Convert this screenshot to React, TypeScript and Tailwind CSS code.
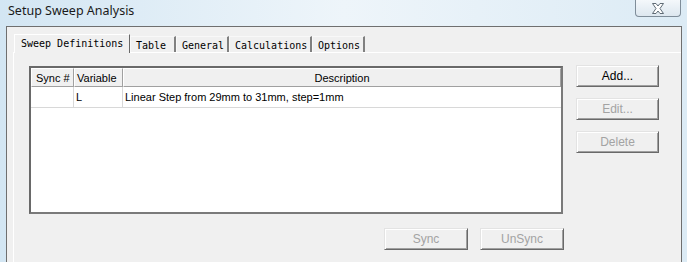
import React from "react";

const tabs = [
  { label: "Sweep Definitions", width: "w-[116px]", active: true },
  { label: "Table", width: "w-[46px]" },
  { label: "General", width: "w-[53px]" },
  { label: "Calculations", width: "w-[83px]" },
  { label: "Options", width: "w-[53px]" },
];

function Tab({ label, width, active }: { label: string; width: string; active?: boolean }) {
  if (active) {
    return (
      <div
        className={`${width} h-[19px] -mb-px relative z-10 bg-[#f0f0f0] border-t border-l border-white border-r border-r-[#696969] pl-[6px] pt-[3px] text-[10px] leading-[12px] whitespace-nowrap`}
      >
        {label}
      </div>
    );
  }
  return (
    <div className={`${width} h-[16px] mt-[2px] border-t border-l border-[#f8f8f8] border-r-2 border-r-[#808080] pl-[5px] pt-[3px] text-[10px] leading-[12px] whitespace-nowrap`}>
      {label}
    </div>
  );
}

function Btn({ children, disabled, w = "w-[83px]" }: { children: React.ReactNode; disabled?: boolean; w?: string }) {
  return (
    <div
      className={`${w} h-[22px] flex items-center justify-center bg-[#f0f0f0] border border-t-[#e3e3e3] border-l-[#e3e3e3] border-r-[#696969] border-b-[#696969] shadow-[inset_1px_1px_0_#ffffff,inset_-1px_-1px_0_#a0a0a0] text-[12px] ${
        disabled ? "text-[#a3a3a3]" : "text-black"
      }`}
    >
      {children}
    </div>
  );
}

export default function App() {
  return (
    <div className="relative w-[687px] h-[262px] overflow-hidden bg-gradient-to-r from-[#d3e6f3] via-[#eef5fa] to-[#dcebf5] font-['Liberation_Sans',Arial,sans-serif] text-black">
      {/* title bar */}
      <div className="h-[26px] pl-[8px] pt-[2px] font-['Noto_Sans',sans-serif] text-[12.5px] leading-[18px] text-[#1a1a1a]">
        Setup Sweep Analysis
      </div>
      <div className="absolute top-0 right-[6px] w-[46px] h-[17px] rounded-b-[4px] border border-t-0 border-[#7f8d99] bg-gradient-to-b from-[#f4f8fb] to-[#dde7ef] flex items-center justify-center">
        <svg width="14" height="11" viewBox="0 0 14 11">
          <path
            d="M1.5 0.5 H5 L7 3 L9 0.5 H12.5 L9 5.5 L12.5 10.5 H9 L7 8 L5 10.5 H1.5 L5 5.5 Z"
            fill="#ffffff"
            stroke="#5f6b75"
            strokeWidth="1"
          />
        </svg>
      </div>

      {/* dialog body */}
      <div className="ml-[6px] mr-[5px] h-[236px] border-t border-l border-r border-[#6f6f6f] bg-[#f0f0f0] pt-[7px]">
        {/* tab strip */}
        <div className="flex items-start ml-[7px] font-['DejaVu_Sans_Mono','Liberation_Mono',monospace]">
          {tabs.map((t) => (
            <Tab key={t.label} label={t.label} width={t.width} active={t.active} />
          ))}
        </div>

        {/* tab page */}
        <div className="ml-[6px] h-[220px] border-t border-l border-white pl-[15px] pt-[13px]">
          <div className="flex items-start gap-[13px]">
            <div className="flex flex-col">
              <div className="w-[534px] h-[148px] border-2 border-t-[#696969] border-l-[#696969] border-r-[#7a7a7a] border-b-[#7a7a7a] bg-white">
                <div className="flex h-[19px] text-[11px] leading-[18px]">
                  <div className="w-[43px] bg-[#f0f0f0] border-t border-l border-white border-r border-b border-r-[#a0a0a0] border-b-[#a0a0a0] pl-[4px]">
                    Sync #
                  </div>
                  <div className="w-[49px] bg-[#f0f0f0] border-t border-l border-white border-r border-b border-r-[#a0a0a0] border-b-[#a0a0a0] pl-[2px]">
                    Variable
                  </div>
                  <div className="flex-1 bg-[#f0f0f0] border-t border-l border-white border-r border-b border-r-[#a0a0a0] border-b-[#a0a0a0] text-center">
                    Description
                  </div>
                </div>
                <div className="flex h-[21px] text-[11px] leading-[20px] border-b border-[#d8d8d8]">
                  <div className="w-[43px] border-r border-[#d8d8d8]"></div>
                  <div className="w-[49px] border-r border-[#d8d8d8] pl-[2px]">L</div>
                  <div className="flex-1 pl-[2px]">Linear Step from 29mm to 31mm, step=1mm</div>
                </div>
              </div>
              <div className="flex justify-end gap-[12px] mt-[14px] mr-[-1px]">
                <Btn disabled w="w-[84px]">Sync</Btn>
                <Btn disabled w="w-[84px]">UnSync</Btn>
              </div>
            </div>
            <div className="flex flex-col gap-[11px] -mt-px">
              <Btn>Add...</Btn>
              <Btn disabled>Edit...</Btn>
              <Btn disabled>Delete</Btn>
            </div>
          </div>
        </div>
      </div>
    </div>
  );
}
